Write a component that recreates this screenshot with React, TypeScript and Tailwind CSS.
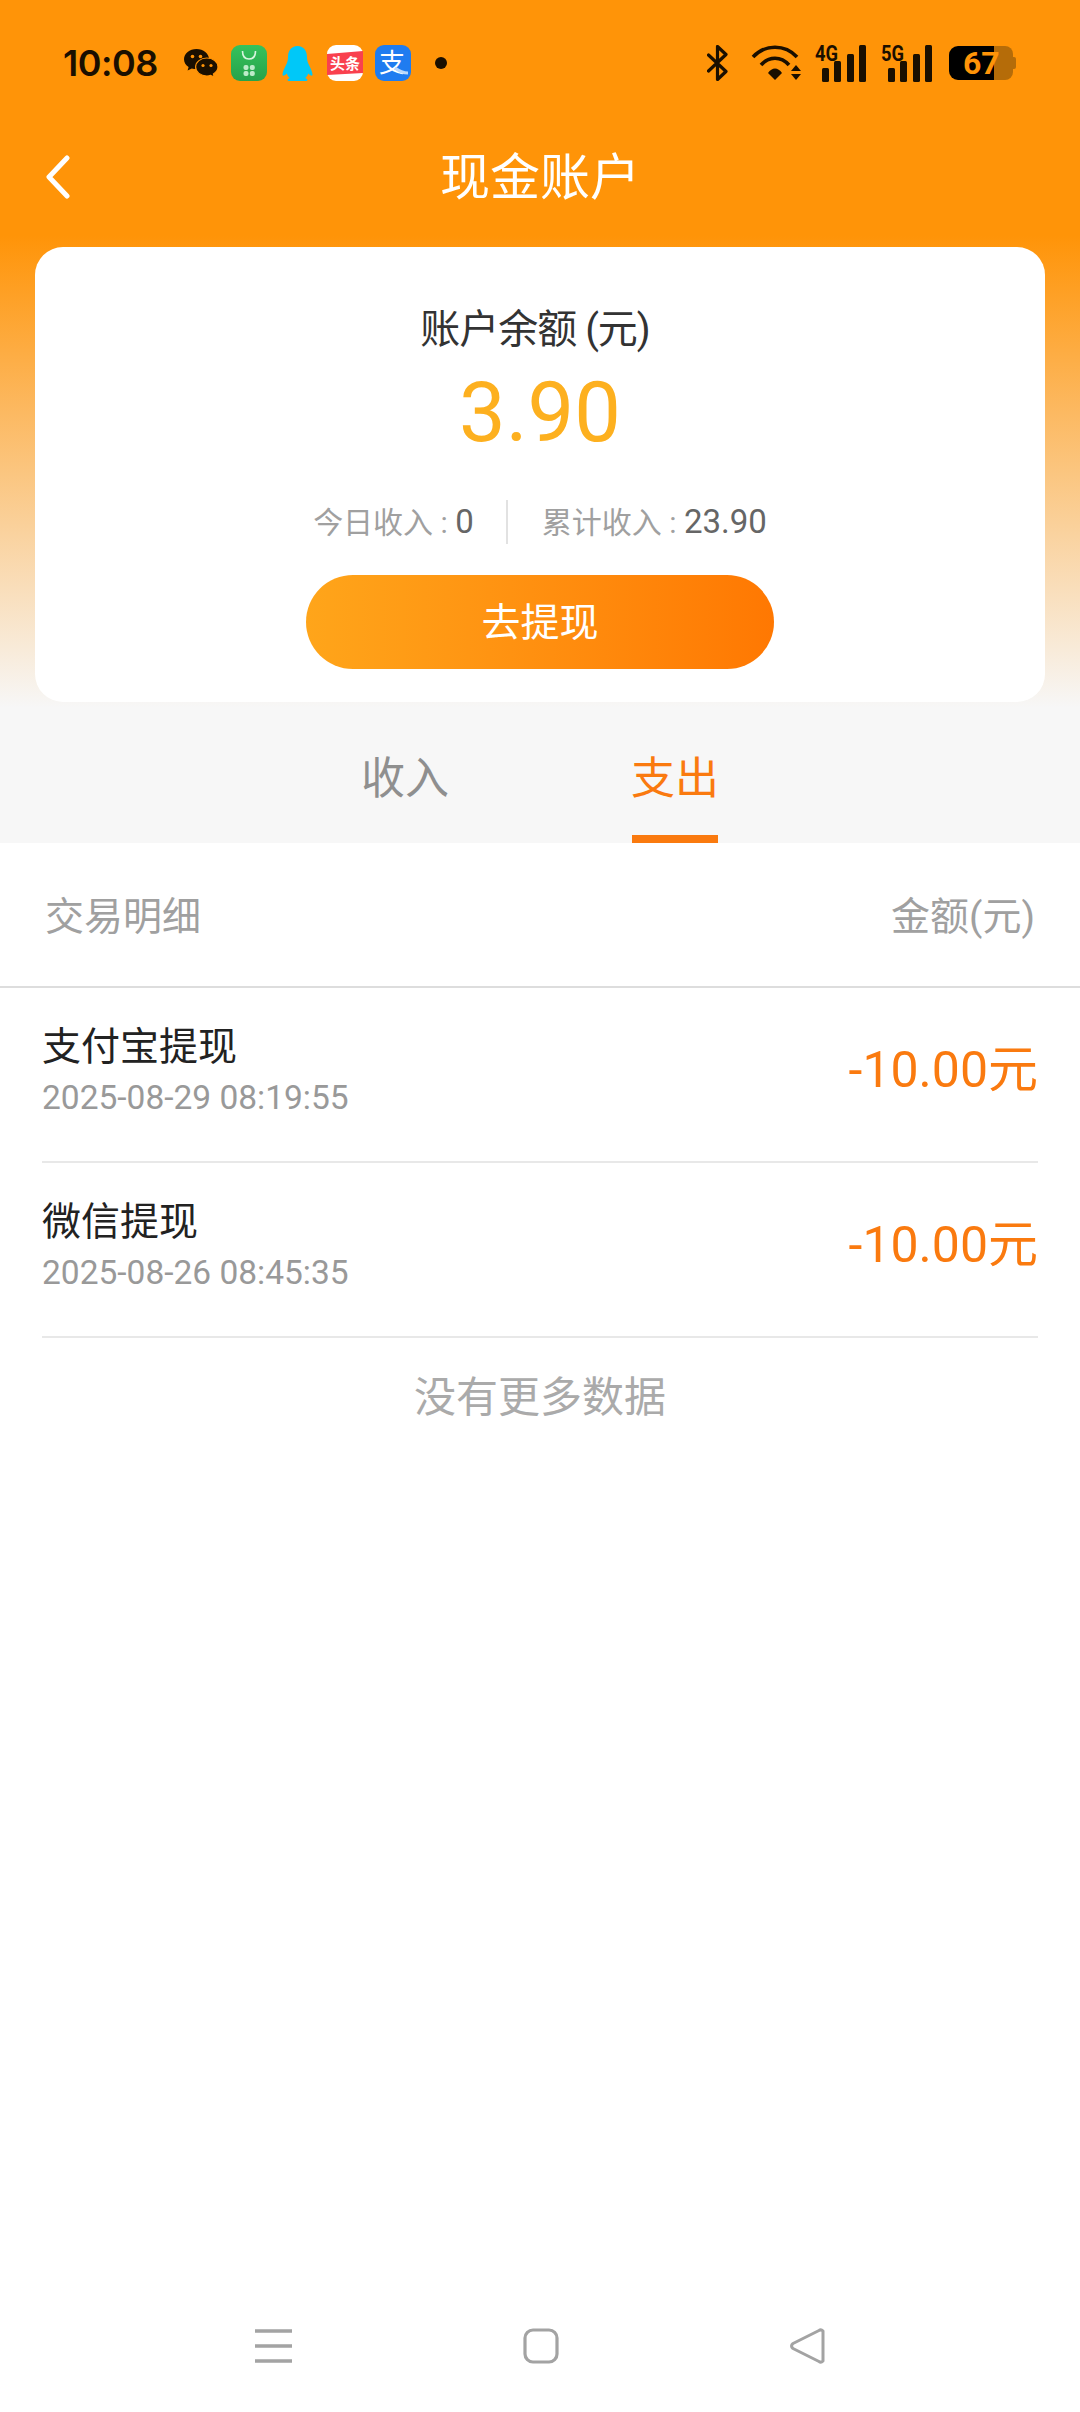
const BAR = '#1a0f00';

const WechatIcon = () => (
  <svg width="34" height="28" viewBox="0 0 34 28" className="ml-[27px]">
    <path d="M12.5 0C5.6 0 0 4.6 0 10.2c0 3.2 1.8 6 4.6 7.9L3.6 21.6l4.2-2.2c1.5.4 3 .7 4.7.7 6.9 0 12.5-4.5 12.5-10C25 4.6 19.4 0 12.5 0z" fill={BAR} />
    <path d="M22.8 9C16.7 9 11.6 13 11.6 18c0 5 5.1 9 11.2 9 1.3 0 2.6-.2 3.8-.6l3.6 1.6-.8-3c2.7-1.7 4.6-4.2 4.6-7C34 13 28.9 9 22.8 9z" fill={BAR} stroke="#ff9408" strokeWidth="1.2" />
    <circle cx="8.5" cy="7.5" r="1.8" fill="#ff9408" />
    <circle cx="16.5" cy="7.5" r="1.8" fill="#ff9408" />
    <circle cx="19" cy="16.5" r="1.6" fill="#ff9408" />
    <circle cx="27" cy="16.5" r="1.6" fill="#ff9408" />
  </svg>
);

const StoreIcon = () => (
  <svg width="36" height="36" viewBox="0 0 36 36" className="ml-[13px]">
    <defs>
      <linearGradient id="storeGreen" x1="0" y1="0" x2="0" y2="1">
        <stop offset="0" stopColor="#35c25c" />
        <stop offset="1" stopColor="#27a24a" />
      </linearGradient>
    </defs>
    <rect width="36" height="36" rx="9" fill="url(#storeGreen)" />
    <path d="M11.5 6c0 5 2.5 8 6.5 8s6.5-3 6.5-8" fill="none" stroke="#d8f5df" strokeWidth="1.6" />
    <rect x="12.5" y="20" width="5" height="5" rx="2" fill="#bdebc9" />
    <rect x="18.8" y="20" width="5" height="5" rx="2" fill="#bdebc9" />
    <rect x="12.5" y="26" width="5" height="5" rx="2" fill="#bdebc9" />
    <rect x="18.8" y="26" width="5" height="5" rx="2" fill="#bdebc9" />
  </svg>
);

const QQIcon = () => (
  <svg width="31" height="35" viewBox="0 0 31 35" className="ml-[15px]">
    <path d="M15.5 0C9 0 6 5 6 11c0 3-.5 5-2 8-1.5 3-3.5 7-3.5 9.5 0 1 .5 1.5 1.5 1 1-.3 2-1 2.8-2 .7 2 1.7 3.5 3 4.5-1.5.5-2.3 1.2-2.3 2 0 1 1.5 1 4 1h4c1 0 2 0 4 0h4c2.5 0 4 0 4-1 0-.8-.8-1.500-2.300-2 1.300-1 2.300-2.500 3-4.500.8 1 1.800 1.700 2.800 2 1 .5 1.500 0 1.500-1 0-2.500-2-6.500-3.500-9.500-1.500-3-2-5-2-8 0-6-3-11-9.500-11z" fill="#00c8f8" />
  </svg>
);

const ToutiaoIcon = () => (
  <svg width="36" height="36" viewBox="0 0 36 36" className="ml-[14px]">
    <rect width="36" height="36" rx="9" fill="#fff" />
    <path d="M0 9 L36 6 V28 L0 30 Z" fill="#f9404e" />
    <text x="18" y="23.5" textAnchor="middle" fontSize="15" fontWeight="700" fill="#fff" fontFamily="'Noto Sans CJK SC', sans-serif">头条</text>
  </svg>
);

const AlipayIcon = () => (
  <svg width="36" height="36" viewBox="0 0 36 36" className="ml-[12px] overflow-visible">
    <rect width="36" height="36" rx="9" fill="#1f7cf0" />
    <text x="17" y="27" textAnchor="middle" fontSize="26" fontWeight="400" fill="#fff" fontFamily="'Noto Sans CJK SC', sans-serif">支</text>
    <path d="M20 23c4 3 8 5 13 5" fill="none" stroke="#bcd9fb" strokeWidth="3" />
  </svg>
);

const BluetoothIcon = () => (
  <svg width="21" height="36" viewBox="0 0 21 36">
    <path d="M1.5 10 L19 26.5 L10.5 34.5 V1.5 L19 9.5 L1.5 26" fill="none" stroke={BAR} strokeWidth="3.2" strokeLinejoin="round" strokeLinecap="round" />
  </svg>
);

const WifiIcon = () => (
  <svg width="51" height="36" viewBox="0 0 51 36" className="ml-[23px]">
    <path d="M2 12C14-1 34-1 46 12" fill="none" stroke={BAR} strokeWidth="3.6" />
    <path d="M10 20C18 11 30 11 38 20" fill="none" stroke={BAR} strokeWidth="3.6" />
    <path d="M17 28C21 22 27 22 31 28L24 35Z" fill={BAR} />
    <path d="M40 26H50L45 20Z" fill={BAR} />
    <path d="M40 29H50L45 35Z" fill={BAR} />
  </svg>
);

const SignalIcon = ({ label, className }: { label: string; className: string }) => (
  <svg width="52" height="37" viewBox="0 0 52 37" className={`overflow-visible ${className}`}>
    <text x="0" y="16" fontSize="22" fontWeight="700" fill={BAR} textLength="23" lengthAdjust="spacingAndGlyphs" fontFamily="Roboto, sans-serif">{label}</text>
    <rect x="7" y="23" width="7" height="14" rx="1.5" fill={BAR} />
    <rect x="19" y="16" width="7" height="21" rx="1.5" fill={BAR} />
    <rect x="32" y="9" width="7" height="28" rx="1.5" fill={BAR} />
    <rect x="44" y="0" width="7" height="37" rx="1.5" fill={BAR} />
  </svg>
);

const BatteryIcon = () => (
  <div className="relative ml-[16px] flex h-[34px] w-[67px] items-center">
    <div className="h-full w-[45px] rounded-l-[9px] bg-black" />
    <div className="h-full w-[19px] rounded-r-[8px] bg-[#b56c09]" />
    <div className="h-[12px] w-[3px] rounded-r-[2px] bg-[#b56c09]" />
    <span className="absolute left-[14px] top-0 text-[32px] leading-[34px] font-bold text-[#ff9408] [font-family:Roboto,sans-serif]">67</span>
  </div>
);

const StatusBar = () => (
  <div className="flex h-[126px] items-center justify-between pl-[63px] pr-[64px]">
    <div className="flex items-center">
      <span className="w-[94px] text-[36px] leading-[40px] font-semibold text-[#1a0f00] [font-family:Inter,sans-serif] tracking-[-0.5px]">10:08</span>
      <WechatIcon />
      <StoreIcon />
      <QQIcon />
      <ToutiaoIcon />
      <AlipayIcon />
      <div className="ml-[24px] h-[12px] w-[12px] rounded-full bg-[#1a0f00]" />
    </div>
    <div className="flex items-center">
      <BluetoothIcon />
      <WifiIcon />
      <SignalIcon label="4G" className="ml-[13px]" />
      <SignalIcon label="5G" className="ml-[14px]" />
      <BatteryIcon />
    </div>
  </div>
);

const records = [
  { title: '支付宝提现', time: '2025-08-29 08:19:55', amount: '-10.00元' },
  { title: '微信提现', time: '2025-08-26 08:45:35', amount: '-10.00元' },
];

export default function App() {
  return (
    <div className="flex min-h-[2412px] flex-col bg-white [font-family:Roboto,'Noto_Sans_CJK_SC',sans-serif]">
      {/* 顶部渐变 */}
      <div className="h-[843px] bg-linear-to-b/srgb from-[#ff9408] from-[28%] to-[#f7f7f7] to-[84%]">
        <StatusBar />
        <div className="grid h-[102px] grid-cols-[1fr_auto_1fr] items-center pl-[46px]">
          <svg width="24" height="44" viewBox="0 0 24 44">
            <path d="M21 3 L3 22 L21 41" fill="none" stroke="#fff" strokeWidth="5" strokeLinecap="round" strokeLinejoin="round" />
          </svg>
          <div className="relative left-[-23px] top-[1px] text-[50px] leading-[60px] text-white">现金账户</div>
          <div />
        </div>

        <div className="mx-[35px] mt-[19px] flex h-[455px] flex-col items-center rounded-[28px] bg-white pt-[55px]">
          <div className="mr-[10px] h-[56px] text-[40px] leading-[56px] text-[#333] tracking-[-1px]">账户余额 (元)</div>
          <div className="mt-[10px] h-[90px] text-[83px] leading-[90px] text-[#fdb01f]">3.90</div>
          <div className="mt-[42px] flex h-[44px] items-center text-[30px] leading-[44px] text-[#a0a0a0]">
            <span>今日收入 : <span className="text-[33px] text-[#666]">0</span></span>
            <div className="ml-[32px] mr-[34px] h-[44px] w-[2px] bg-[#e2e2e2]" />
            <span>累计收入 : <span className="text-[33px] text-[#666]">23.90</span></span>
          </div>
          <div className="mt-[31px] flex h-[94px] w-[468px] items-center justify-center rounded-full bg-linear-to-r from-[#ffa51a] to-[#ff7802] pt-[3px] text-[39px] text-white">去提现</div>
        </div>

        <div className="flex justify-center gap-[182px] pt-[47px]">
          <div className="flex w-[88px] flex-col items-center text-[44px] leading-[60px] text-[#8f8f8f]">收入</div>
          <div className="flex w-[88px] flex-col items-center text-[44px] leading-[60px] text-[#fa7a0f]">
            支出
            <div className="mt-[26px] h-[8px] w-[86px] shrink-0 bg-[#fa7a0f]" />
          </div>
        </div>
      </div>

      {/* 明细 */}
      <div className="flex h-[145px] items-center justify-between border-b-2 border-[#ddd] pl-[45px] pr-[45px] pt-[5px] text-[39px] text-[#a0a0a0]">
        <span>交易明细</span>
        <span>金额(元)</span>
      </div>
      <div className="px-[42px]">
        {records.map((r) => (
          <div key={r.time} className="flex h-[175px] items-center justify-between border-b-2 border-[#e8e8e8] pb-[8px]">
            <div>
              <div className="text-[39px] leading-[54px] text-[#222]">{r.title}</div>
              <div className="text-[33.5px] leading-[48px] text-[#999]">{r.time}</div>
            </div>
            <div className="text-[50px] text-[#fa7a0f]">{r.amount}</div>
          </div>
        ))}
      </div>
      <div className="flex h-[116px] items-center justify-center pt-[2px] text-[42px] text-[#aaa]">没有更多数据</div>

      {/* 系统导航 */}
      <div className="mt-auto flex items-center justify-center gap-[231px] pb-[48px]">
        <svg width="37" height="36" viewBox="0 0 37 36">
          <path d="M0 3H37M0 18H37M0 33H37" stroke="#a3a3a3" strokeWidth="3.5" />
        </svg>
        <svg width="36" height="36" viewBox="0 0 36 36">
          <rect x="2" y="2" width="32" height="32" rx="8" fill="none" stroke="#a3a3a3" strokeWidth="3.2" />
        </svg>
        <svg width="35" height="36" viewBox="0 0 35 36">
          <path d="M33 3 Q31 1 29 2.5 L3 15.5 Q0 18 3 20.5 L29 33.5 Q31 35 33 33 Z" fill="none" stroke="#a3a3a3" strokeWidth="3" strokeLinejoin="round" />
        </svg>
      </div>
    </div>
  );
}
